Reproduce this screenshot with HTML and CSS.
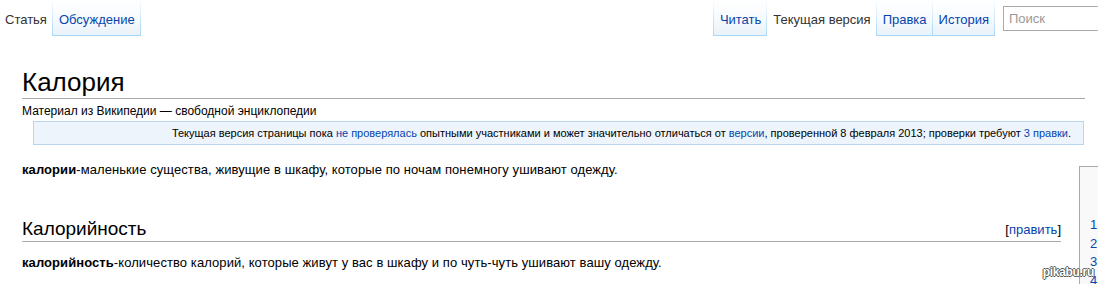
FILE: index.html
```html
<!DOCTYPE html>
<html lang="ru">
<head>
    <meta charset="UTF-8">
    <title>Калория — Википедия</title>
    <link rel="stylesheet" href="styles.css">
</head>
<body>

<header class="head">
    <nav class="tabs">
        <a class="tab selected" href="#">Статья</a>
        <a class="tab last" href="#">Обсуждение</a>
    </nav>
    <div class="spacer"></div>
    <nav class="tabs">
        <a class="tab" href="#">Читать</a>
        <a class="tab selected" href="#">Текущая версия</a>
        <a class="tab" href="#">Правка</a>
        <a class="tab last" href="#">История</a>
        <input class="search" type="text" placeholder="Поиск">
    </nav>
</header>

<div class="content">
    <h1 class="title">Калория</h1>
    <div class="site-sub">Материал из Википедии — свободной энциклопедии</div>
    <div class="notice">
        Текущая версия страницы пока <a href="#">не проверялась</a> опытными участниками и может значительно отличаться от <a href="#">версии</a>, проверенной 8 февраля 2013; проверки требуют <a href="#">3 правки</a>.
    </div>

    <div class="body-row">
        <div class="article">
            <p><b>калории</b>-маленькие существа, живущие в шкафу, которые по ночам понемногу ушивают одежду.</p>

            <h2 class="section">
                Калорийность
                <span class="edit">[<a href="#">править</a>]</span>
            </h2>

            <p class="after-h2"><b>калорийность</b>-количество калорий, которые живут у вас в шкафу и по чуть-чуть ушивают вашу одежду.</p>
        </div>

        <div class="toc">
            <div class="toc-title"></div>
            <ul>
                <li><a href="#">1</a></li>
                <li><a href="#">2</a></li>
                <li><a href="#">3</a></li>
                <li><a href="#">4</a></li>
            </ul>
        </div>
    </div>
</div>

<div class="watermark">pikabu.ru</div>

</body>
</html>
```

FILE: styles.css
```css
body {
    margin: 0;
    width: 1098px;
    height: 284px;
    overflow: hidden;
    position: relative;
    background: #fff;
    color: #000;
    font-family: "Liberation Sans", Arial, sans-serif;
}

a {
    color: #0645ad;
    text-decoration: none;
}

/* top tabs */
.head {
    display: flex;
    height: 40px;
    background: #fff;
}

.spacer {
    flex: 1;
}

.tabs {
    display: flex;
    align-items: flex-start;
}

.tab {
    box-sizing: border-box;
    height: 36px;
    padding: 12px 5px 0 6px;
    font-size: 13px;
    line-height: 16px;
    white-space: nowrap;
    border-left: 1px solid;
    border-image: linear-gradient(to bottom, rgba(167, 215, 249, 0), #a7d7f9) 1;
    background: linear-gradient(to bottom, #ffffff 0%, #f6fafd 55%, #e8f2f8 100%);
    box-shadow: inset 0 -1px 0 #a7d7f9;
}

.tab.last {
    border-right: 1px solid;
}

.tab.selected {
    color: #333;
    background: #fff;
    box-shadow: none;
}

.head .tabs:first-child .tab.selected {
    border-left: 0;
    padding-left: 5px;
}

.search {
    box-sizing: border-box;
    margin: 6px 0 0 8px;
    width: 95px;
    height: 25px;
    padding: 0 5px;
    border: 1px solid #aaa;
    border-right: 0;
    font-family: "Liberation Sans", Arial, sans-serif;
    font-size: 13px;
    color: #333;
}

.search::placeholder {
    color: #999;
}

/* content */
.content {
    padding: 0 13px 0 22px;
}

.title {
    margin: 26px 0 0;
    font-size: 26px;
    font-weight: normal;
    line-height: 32px;
    border-bottom: 1px solid #aaa;
}

.site-sub {
    margin-top: 4px;
    font-size: 12px;
    line-height: 16px;
}

.notice {
    box-sizing: border-box;
    margin: 2px 1px 0 11px;
    height: 24px;
    padding-right: 12px;
    text-align: right;
    font-size: 11px;
    line-height: 22px;
    white-space: nowrap;
    background: #edf4fc;
    border: 1px solid #b9d5ee;
}

.body-row {
    display: flex;
    align-items: flex-start;
    margin-top: 15px;
}

.article {
    flex: 0 0 1039px;
}

.article p {
    margin: 0;
    font-size: 13px;
    line-height: 19.5px;
    letter-spacing: 0.08px;
}

.section {
    margin: 37px 0 0;
    font-size: 19px;
    font-weight: normal;
    line-height: 24px;
    border-bottom: 1px solid #aaa;
}

.edit {
    float: right;
    font-size: 13px;
    line-height: 22px;
    margin-top: 2px;
}

.article p.after-h2 {
    margin-top: 11px;
}

.toc {
    flex: 0 0 200px;
    margin: 6px 0 0 18px;
    border: 1px solid #aaa;
    background: #f9f9f9;
    height: 200px;
}

.toc-title {
    height: 49px;
}

.toc ul {
    margin: 0;
    padding: 0 0 0 10px;
    list-style: none;
}

.toc li {
    font-size: 13px;
    line-height: 18.5px;
}

.watermark {
    position: absolute;
    right: 4px;
    bottom: 5px;
    font-size: 12px;
    font-weight: bold;
    color: #fff;
    letter-spacing: -0.3px;
    text-shadow: 1px 0 0 #555, -1px 0 0 #555, 0 1px 0 #555, 0 -1px 0 #555;
}
```
